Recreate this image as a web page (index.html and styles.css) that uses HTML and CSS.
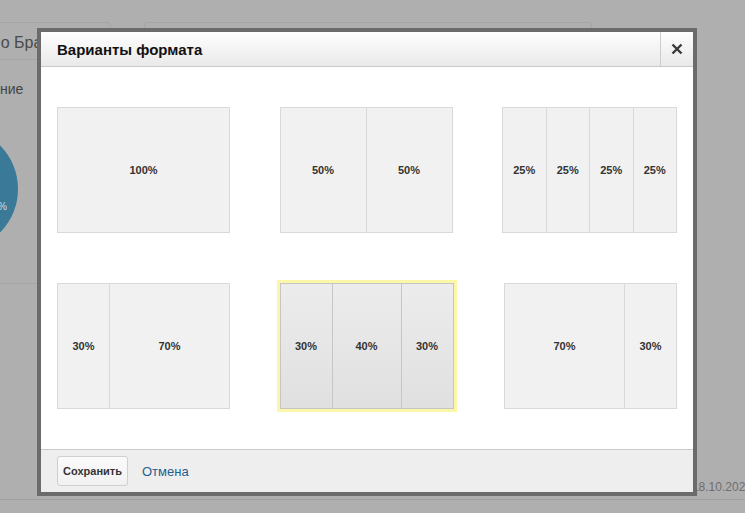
FILE: index.html
```html
<!DOCTYPE html>
<html lang="ru">

<head>
    <meta charset="UTF-8">
    <meta name="viewport" content="width=device-width, initial-scale=1.0">
    <title>Варианты формата</title>
    <link rel="stylesheet" href="styles.css">
</head>

<body>
    <div class="page">
        <div class="cards">
            <div class="card card_left">
                <div class="card_head">по Браузерам</div>
                <div class="card_sub">Распределение</div>
                <div class="pie"><span>%</span></div>
            </div>
            <div class="card card_right">
                <div class="card_head"></div>
            </div>
        </div>
        <div class="page_foot">
            <span class="date">18.10.2020</span>
        </div>
    </div>

    <div class="dialog">
        <div class="dialog_head">
            <span class="dialog_title">Варианты формата</span>
            <span class="close">
                <svg width="12" height="12" viewBox="0 0 12 12">
                    <path d="M1.5 1.5 L10.5 10.5 M10.5 1.5 L1.5 10.5" stroke="#3a3a3a" stroke-width="2.4" />
                </svg>
            </span>
        </div>
        <div class="dialog_body">
            <div class="option">
                <div class="col" style="flex: 100">100%</div>
            </div>
            <div class="option">
                <div class="col" style="flex: 50">50%</div>
                <div class="col" style="flex: 50">50%</div>
            </div>
            <div class="option">
                <div class="col" style="flex: 25">25%</div>
                <div class="col" style="flex: 25">25%</div>
                <div class="col" style="flex: 25">25%</div>
                <div class="col" style="flex: 25">25%</div>
            </div>
            <div class="option">
                <div class="col" style="flex: 30">30%</div>
                <div class="col" style="flex: 70">70%</div>
            </div>
            <div class="option option_current">
                <div class="col" style="flex: 30">30%</div>
                <div class="col" style="flex: 40">40%</div>
                <div class="col" style="flex: 30">30%</div>
            </div>
            <div class="option option_last">
                <div class="col" style="flex: 70">70%</div>
                <div class="col" style="flex: 30">30%</div>
            </div>
        </div>
        <div class="dialog_foot">
            <button class="btn">Сохранить</button>
            <a class="cancel" href="#">Отмена</a>
        </div>
    </div>
</body>

</html>
```

FILE: styles.css
```css
* {
    margin: 0;
    padding: 0;
    box-sizing: border-box;
}

body {
    width: 745px;
    height: 513px;
    overflow: hidden;
    background-color: #afafaf;
    font-family: "Liberation Sans", Arial, sans-serif;
    position: relative;
}

/* страница под затемнением */
.page {
    padding-top: 22px;
}

.cards {
    display: flex;
    gap: 33px;
    height: 262px;
}

.card {
    height: 262px;
    border: 1px solid #a4a4a4;
    border-radius: 4px;
}

.card_left {
    width: 250px;
    margin-left: -139px;
    position: relative;
    overflow: hidden;
}

.card_right {
    width: 448px;
}

.card_head {
    height: 37px;
    border-bottom: 1px solid #a4a4a4;
    padding-left: 4px;
    line-height: 40px;
    font-size: 16px;
    color: #4a4a4a;
    white-space: nowrap;
}

.card_left .card_head {
    text-indent: 126px;
}

.card_sub {
    margin-top: 21px;
    font-size: 14px;
    color: #444;
    text-indent: 60px;
    white-space: nowrap;
}

.pie {
    position: absolute;
    left: 40px;
    top: 106px;
    width: 116px;
    height: 120px;
    border-radius: 50%;
    background-color: #3a7a98;
}

.pie span {
    position: absolute;
    left: 96px;
    top: 72px;
    font-size: 10px;
    color: #cfdce2;
}

.page_foot {
    display: flex;
    justify-content: flex-end;
    height: 216px;
    border-bottom: 1px solid #a0a0a0;
    padding-top: 196px;
}

.date {
    margin-right: -7px;
    font-size: 12px;
    color: #6e6e6e;
}

/* окно */
.dialog {
    position: absolute;
    left: 37px;
    top: 28px;
    width: 660px;
    border: 4px solid #6b6b6b;
    background-color: #fff;
}

.dialog_head {
    display: flex;
    height: 35px;
    border-bottom: 1px solid #c9c9c9;
    background: linear-gradient(#fefefe, #e9e9e9);
}

.dialog_title {
    flex: 1;
    padding-left: 16px;
    line-height: 35px;
    font-size: 15px;
    font-weight: bold;
    color: #111;
}

.close {
    display: flex;
    width: 33px;
    align-items: center;
    justify-content: center;
    border-left: 1px solid #cdcdcd;
    cursor: pointer;
}

.dialog_body {
    display: grid;
    grid-template-columns: 173px 173px 175px;
    justify-content: space-between;
    row-gap: 50px;
    padding: 40px 16px;
}

.option {
    display: flex;
    height: 126px;
    border: 1px solid #d9d9d9;
    background-color: #f1f1f1;
    cursor: pointer;
}

.option .col {
    display: flex;
    align-items: center;
    justify-content: center;
    font-size: 11px;
    font-weight: bold;
    color: #333;
}

.option .col + .col {
    border-left: 1px solid #d9d9d9;
}

.option_current {
    width: 174px;
    border-color: #c6c6c6;
    outline: 3px solid #fbf6a8;
}

.option_current .col {
    background: linear-gradient(#ececec, #e0e0e0);
}

.option_current .col + .col {
    border-left-color: #c6c6c6;
}

.option_last {
    margin-left: 2px;
}

.dialog_foot {
    display: flex;
    align-items: center;
    gap: 14px;
    height: 43px;
    padding-left: 16px;
    border-top: 1px solid #c9c9c9;
    background-color: #eeeeee;
}

.btn {
    width: 71px;
    height: 30px;
    border: 1px solid #cfcfcf;
    border-radius: 3px;
    background: linear-gradient(#fbfbfb, #f1f1f1);
    font-family: inherit;
    font-size: 11px;
    font-weight: bold;
    color: #333;
}

.cancel {
    font-size: 13px;
    color: #1f5f8f;
    text-decoration: none;
}
```
